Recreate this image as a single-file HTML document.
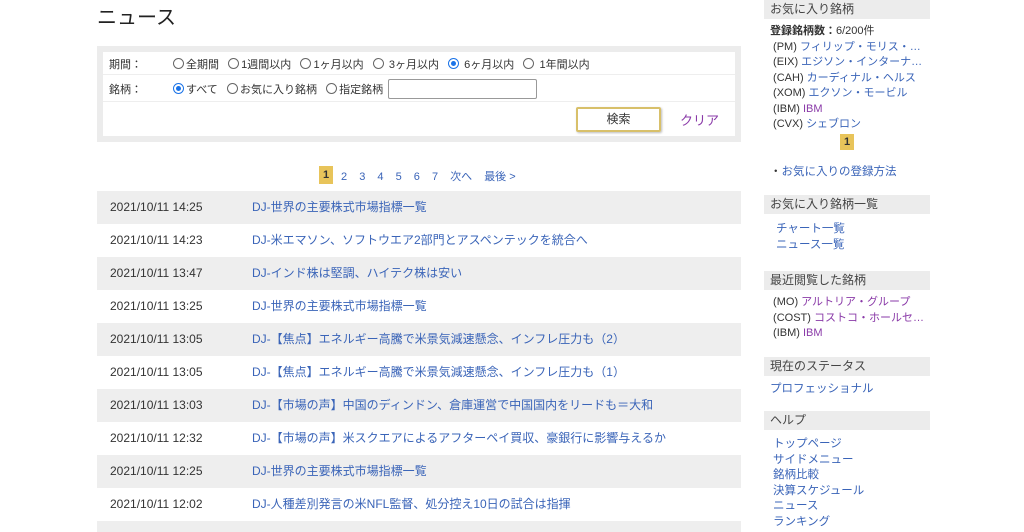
<!DOCTYPE html>
<html><head><meta charset="utf-8"><style>
*{margin:0;padding:0;box-sizing:border-box}
html,body{width:1024px;height:532px;overflow:hidden}
body{background:#fff;font-family:"Liberation Sans","Noto Sans CJK JP",sans-serif;font-size:12px;color:#333;position:relative}
.a{position:absolute;white-space:nowrap}
a{color:#3a64b8;text-decoration:none}
.v{color:#8a3aa8}
.rad{display:inline-block;width:11px;height:11px;border:1px solid #666;border-radius:50%;vertical-align:-1px;margin-right:2px;position:relative}
.rad.on{border-color:#1a73e8}
.rad.on:after{content:"";position:absolute;left:2px;top:2px;width:5px;height:5px;border-radius:50%;background:#1a73e8}
.row{position:absolute;left:97px;width:644px;height:33px;line-height:33px}
.row .d{position:absolute;left:13px;color:#333}
.row a{position:absolute;left:155px}
.g{background:#eeeeee}
.sh{position:absolute;left:764px;width:166px;height:19px;line-height:19px;background:#ececec;padding-left:6px;color:#444}
.sl{position:absolute;left:770px;line-height:15.5px;font-size:11.5px}
</style></head><body>
<div class="a" style="left:97px;top:1px;font-size:20px;color:#222">ニュース</div>
<div class="a" style="left:97px;top:46px;width:644px;height:96px;background:#ececec"></div>
<div class="a" style="left:103px;top:52px;width:632px;height:84px;background:#fff"></div>
<div class="a" style="left:103px;top:74px;width:632px;border-top:1px solid #eee"></div>
<div class="a" style="left:103px;top:101px;width:632px;border-top:1px solid #eee"></div>
<div class="a" style="left:109px;top:56px;font-size:11px">期間：</div>
<div class="a" style="left:173px;top:56px;font-size:11px"><span class="rad"></span>全期間&nbsp;&nbsp; <span class="rad"></span>1週間以内&nbsp;&nbsp; <span class="rad"></span>1ヶ月以内&nbsp;&nbsp; <span class="rad"></span> 3ヶ月以内&nbsp;&nbsp; <span class="rad on"></span> 6ヶ月以内&nbsp;&nbsp; <span class="rad"></span> 1年間以内</div>
<div class="a" style="left:109px;top:81px;font-size:11px">銘柄：</div>
<div class="a" style="left:173px;top:81px;font-size:11px"><span class="rad on"></span>すべて&nbsp;&nbsp; <span class="rad"></span>お気に入り銘柄&nbsp;&nbsp; <span class="rad"></span>指定銘柄</div>
<div class="a" style="left:388px;top:79px;width:149px;height:20px;border:1px solid #999;border-radius:2px"></div>
<div class="a" style="left:576px;top:107px;width:85px;height:25px;border:2px solid #d8c06a;border-radius:2px;text-align:center;line-height:21px;font-size:12px;box-shadow:1px 1px 2px #bbb">検索</div>
<div class="a" style="left:680px;top:110px;font-size:13px;color:#8a3aa8">クリア</div>
<div class="a" style="left:319px;top:166px;width:14px;height:18px;background:#e8c45a;text-align:center;line-height:18px;font-weight:bold;font-size:11px">1</div>
<div class="a" style="left:341px;top:168px;font-size:11px;word-spacing:9px"><a>2</a> <a>3</a> <a>4</a> <a>5</a> <a>6</a> <a>7</a> <a>次へ</a> <a style="word-spacing:0">最後 &gt;</a></div>
<div class="row g" style="top:191px"><span class="d">2021/10/11 14:25</span><a>DJ-世界の主要株式市場指標一覧</a></div>
<div class="row" style="top:224px"><span class="d">2021/10/11 14:23</span><a>DJ-米エマソン、ソフトウエア2部門とアスペンテックを統合へ</a></div>
<div class="row g" style="top:257px"><span class="d">2021/10/11 13:47</span><a>DJ-インド株は堅調、ハイテク株は安い</a></div>
<div class="row" style="top:290px"><span class="d">2021/10/11 13:25</span><a>DJ-世界の主要株式市場指標一覧</a></div>
<div class="row g" style="top:323px"><span class="d">2021/10/11 13:05</span><a>DJ-【焦点】エネルギー高騰で米景気減速懸念、インフレ圧力も（2）</a></div>
<div class="row" style="top:356px"><span class="d">2021/10/11 13:05</span><a>DJ-【焦点】エネルギー高騰で米景気減速懸念、インフレ圧力も（1）</a></div>
<div class="row g" style="top:389px"><span class="d">2021/10/11 13:03</span><a>DJ-【市場の声】中国のディンドン、倉庫運営で中国国内をリードも＝大和</a></div>
<div class="row" style="top:422px"><span class="d">2021/10/11 12:32</span><a>DJ-【市場の声】米スクエアによるアフターペイ買収、豪銀行に影響与えるか</a></div>
<div class="row g" style="top:455px"><span class="d">2021/10/11 12:25</span><a>DJ-世界の主要株式市場指標一覧</a></div>
<div class="row" style="top:488px"><span class="d">2021/10/11 12:02</span><a>DJ-人種差別発言の米NFL監督、処分控え10日の試合は指揮</a></div>
<div class="row g" style="top:521px;height:11px"></div>

<div class="sh" style="top:0">お気に入り銘柄</div>
<div class="sl" style="top:24px;font-size:11px"><b>登録銘柄数：</b>6/200件<br>
&nbsp;(PM) <a>フィリップ・モリス・…</a><br>&nbsp;(EIX) <a>エジソン・インターナ…</a><br>&nbsp;(CAH) <a>カーディナル・ヘルス</a><br>&nbsp;(XOM) <a>エクソン・モービル</a><br>&nbsp;(IBM) <a class="v">IBM</a><br>&nbsp;(CVX) <a>シェブロン</a></div>
<div class="a" style="left:840px;top:134px;width:14px;height:16px;background:#e8c45a;text-align:center;line-height:16px;font-weight:bold;font-size:11px">1</div>
<div class="sl" style="top:165px">・<a>お気に入りの登録方法</a></div>
<div class="sh" style="top:195px">お気に入り銘柄一覧</div>
<div class="sl" style="top:222px;left:776px"><a>チャート一覧</a><br><a>ニュース一覧</a></div>
<div class="sh" style="top:271px">最近閲覧した銘柄</div>
<div class="sl" style="top:295px;font-size:11px">&nbsp;(MO) <a class="v">アルトリア・グループ</a><br>&nbsp;(COST) <a class="v">コストコ・ホールセ…</a><br>&nbsp;(IBM) <a class="v">IBM</a></div>
<div class="sh" style="top:357px">現在のステータス</div>
<div class="sl" style="top:382px"><a>プロフェッショナル</a></div>
<div class="sh" style="top:411px">ヘルプ</div>
<div class="sl" style="top:437px;left:773px"><a>トップページ</a><br><a>サイドメニュー</a><br><a>銘柄比較</a><br><a>決算スケジュール</a><br><a>ニュース</a><br><a>ランキング</a></div>
</body></html>
